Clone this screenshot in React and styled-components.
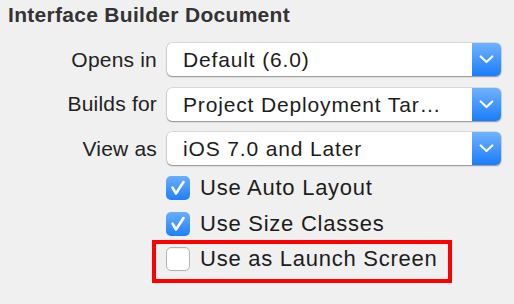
import React from 'react'
import styled, { createGlobalStyle } from 'styled-components'

const Global = createGlobalStyle`
  html, body {
    margin: 0;
    padding: 0;
    background: #f0f0f0;
  }
  body {
    font-family: "Liberation Sans", Arial, sans-serif;
    color: #222;
  }
`

const Panel = styled.div`
  width: 514px;
  height: 304px;
  box-sizing: border-box;
  padding: 3px 0 0 8px;
  background: #f0f0f0;
  overflow: hidden;
`

const Title = styled.div`
  font-size: 21px;
  line-height: 24px;
  font-weight: bold;
  letter-spacing: 0.3px;
  color: #333;
`

const Form = styled.div`
  display: grid;
  grid-template-columns: 149px 334px;
  column-gap: 10px;
  row-gap: 11.5px;
  margin-top: 16px;
  align-items: center;
`

const Label = styled.div`
  font-size: 21px;
  letter-spacing: 0.2px;
  text-align: right;
  white-space: nowrap;
`

const Popup = styled.div`
  display: flex;
  height: 33px;
  border-radius: 5px;
  background: #fff;
  box-shadow: 0 0 0 0.5px rgba(0, 0, 0, 0.18), 0 1px 1.5px rgba(0, 0, 0, 0.35);
  overflow: hidden;
`

const PopupText = styled.div`
  flex: 1;
  padding-left: 16px;
  font-size: 21px;
  letter-spacing: 0.85px;
  line-height: 33px;
  white-space: nowrap;
  overflow: hidden;
  color: #1c1c1c;
`

const Arrow = styled.div`
  width: 29px;
  display: flex;
  align-items: center;
  justify-content: center;
  background: linear-gradient(#70b2fd, #1a7dfb);
`

const Checks = styled.div`
  grid-column: 2;
  display: flex;
  flex-direction: column;
  gap: 12px;
  margin-top: -0.5px;
  margin-left: -1px;
`

const CheckRow = styled.div`
  display: flex;
  align-items: center;
  gap: 10px;
  height: 24px;
`

const Box = styled.div`
  width: 24px;
  height: 24px;
  box-sizing: border-box;
  border-radius: 5px;
  display: flex;
  align-items: center;
  justify-content: center;
  background: ${p => (p.$on ? 'linear-gradient(#6aaefd, #1e80fb)' : '#fff')};
  border: ${p => (p.$on ? 'none' : '1px solid #b4b4b4')};
  box-shadow: ${p => (p.$on ? 'none' : 'inset 0 1px 1px rgba(0,0,0,0.06)')};
`

const CheckText = styled.span`
  font-size: 22px;
  letter-spacing: 0.75px;
  color: #1c1c1c;
  white-space: nowrap;
`

const Highlight = styled.div`
  margin: -8px 0 0 -14px;
  width: 300px;
  box-sizing: border-box;
  border: 4px solid #ff0000;
  padding: 3px 0 8px 10px;
`

const Chevron = () => (
  <svg width="29" height="33" viewBox="0 0 29 33">
    <polyline points="8.7,13.5 14.5,19 20.3,13.5" fill="none" stroke="#fff" strokeWidth="2.2" strokeLinecap="round" strokeLinejoin="round" />
  </svg>
)

const Tick = () => (
  <svg width="24" height="24" viewBox="0 0 24 24">
    <polyline points="6.5,11.5 10,17.5 17.5,6" fill="none" stroke="#fff" strokeWidth="2.6" strokeLinecap="round" strokeLinejoin="round" />
  </svg>
)

const Select = ({ value }) => (
  <Popup>
    <PopupText>{value}</PopupText>
    <Arrow><Chevron /></Arrow>
  </Popup>
)

const Check = ({ on, children }) => (
  <CheckRow>
    <Box $on={on}>{on && <Tick />}</Box>
    <CheckText>{children}</CheckText>
  </CheckRow>
)

export default function App() {
  return (
    <Panel>
      <Global />
      <Title>Interface Builder Document</Title>
      <Form>
        <Label>Opens in</Label>
        <Select value="Default (6.0)" />
        <Label>Builds for</Label>
        <Select value="Project Deployment Tar…" />
        <Label>View as</Label>
        <Select value="iOS 7.0 and Later" />
        <Checks>
          <Check on>Use Auto Layout</Check>
          <Check on>Use Size Classes</Check>
          <Highlight>
            <Check>Use as Launch Screen</Check>
          </Highlight>
        </Checks>
      </Form>
    </Panel>
  )
}
